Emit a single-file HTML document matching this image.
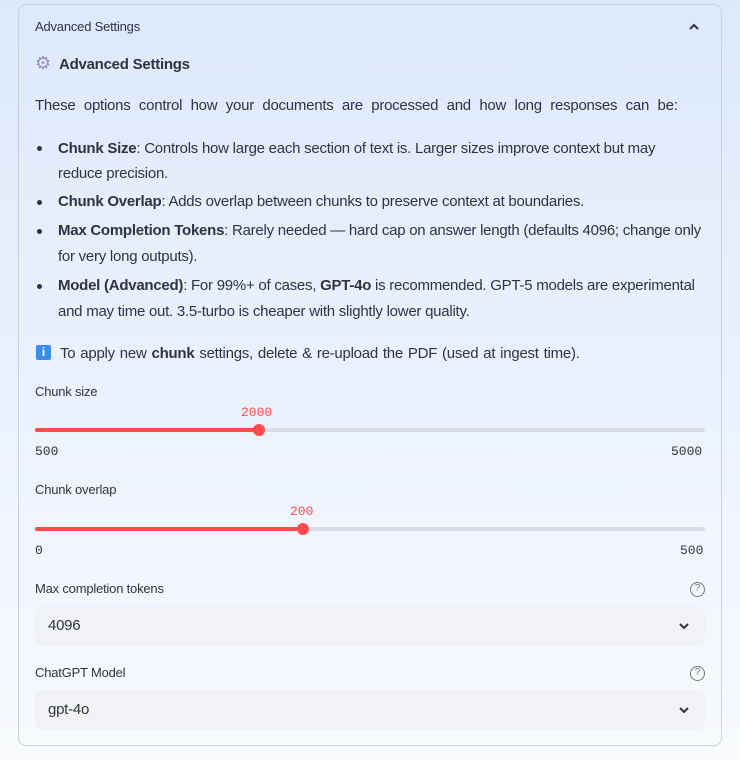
<!DOCTYPE html>
<html><head><style>
*{margin:0;padding:0;box-sizing:border-box}
body{width:740px;height:760px;background:linear-gradient(#dde9fb,#f8faff);font-family:"Liberation Sans",sans-serif;color:#31333f;position:relative;overflow:hidden}
.box{position:absolute;left:18px;top:4px;width:704px;height:742px;border:1px solid #c9d1dd;border-radius:8px}
.a{position:absolute;white-space:nowrap}
.t{font-size:15px;letter-spacing:-0.25px}
.s{font-size:13px;letter-spacing:-0.2px}
.m{font-family:"Liberation Mono",monospace;font-size:13px}
.track{position:absolute;left:35px;width:670px;height:4px;background:#d9dee8;border-radius:2px}
.fill{position:absolute;left:0;top:0;height:4px;background:#ff4b4b;border-radius:2px}
.thumb{position:absolute;top:-4px;width:12px;height:12px;border-radius:50%;background:#ff4b4b}
.sel{position:absolute;left:35px;width:670px;height:40px;background:#f0f2f6;border-radius:8px}
.dot{position:absolute;left:37px;width:5px;height:5px;border-radius:50%;background:#31333f}
.q{position:absolute;left:690px;width:15px;height:15px;border:1.3px solid #777;border-radius:50%;font-size:10px;text-align:center;line-height:12px;color:#777}
</style></head><body>
<div class="box"></div>
<div class="a s" style="left:35px;top:19px">Advanced Settings</div>
<svg class="a" style="left:688px;top:22px" width="12" height="10"><path d="M2 7L6 3L10 7" stroke="#31333f" stroke-width="2" fill="none"/></svg>
<div class="a" style="left:35px;top:53px;font-size:18px;line-height:20px;color:#9a8fc0">⚙</div>
<div class="a t" style="left:59px;top:56px;font-weight:bold">Advanced Settings</div>
<div class="a t" style="left:35px;top:97px;word-spacing:4.5px">These options control how your documents are processed and how long responses can be:</div>
<div class="dot" style="top:146px"></div>
<div class="a t" style="left:58px;top:136px;line-height:25px"><b>Chunk Size</b>: Controls how large each section of text is. Larger sizes improve context but may<br>reduce precision.</div>
<div class="dot" style="top:200px"></div>
<div class="a t" style="left:58px;top:193px"><b>Chunk Overlap</b>: Adds overlap between chunks to preserve context at boundaries.</div>
<div class="dot" style="top:229px"></div>
<div class="a t" style="left:58px;top:218px;line-height:26px"><b>Max Completion Tokens</b>: Rarely needed — hard cap on answer length (defaults 4096; change only<br>for very long outputs).</div>
<div class="dot" style="top:284px"></div>
<div class="a t" style="left:58px;top:273px;line-height:26px"><b>Model (Advanced)</b>: For 99%+ of cases, <b>GPT-4o</b> is recommended. GPT-5 models are experimental<br>and may time out. 3.5-turbo is cheaper with slightly lower quality.</div>
<div class="a" style="left:36px;top:345px;width:15px;height:15px;background:#3b8ee8;border-radius:2px;color:#fff;font-size:12px;font-weight:bold;text-align:center;line-height:15px">i</div>
<div class="a t" style="left:60px;top:345px;word-spacing:1px">To apply new <b>chunk</b> settings, delete &amp; re-upload the PDF (used at ingest time).</div>
<div class="a s" style="left:35px;top:384px">Chunk size</div>
<div class="a m" style="left:241px;top:405px;color:#ff4b4b">2000</div>
<div class="track" style="top:428px"><div class="fill" style="width:224px"></div><div class="thumb" style="left:218px"></div></div>
<div class="a m" style="left:35px;top:444px">500</div>
<div class="a m" style="left:671px;top:444px">5000</div>
<div class="a s" style="left:35px;top:482px">Chunk overlap</div>
<div class="a m" style="left:290px;top:504px;color:#ff4b4b">200</div>
<div class="track" style="top:527px"><div class="fill" style="width:268px"></div><div class="thumb" style="left:262px"></div></div>
<div class="a m" style="left:35px;top:543px">0</div>
<div class="a m" style="left:680px;top:543px">500</div>
<div class="a s" style="left:35px;top:581px">Max completion tokens</div>
<div class="q" style="top:582px">?</div>
<div class="sel" style="top:606px"></div>
<div class="a t" style="left:48px;top:617px">4096</div>
<svg class="a" style="left:678px;top:621px" width="12" height="10"><path d="M2 3L6 7L10 3" stroke="#31333f" stroke-width="2" fill="none"/></svg>
<div class="a s" style="left:35px;top:665px">ChatGPT Model</div>
<div class="q" style="top:666px">?</div>
<div class="sel" style="top:690px"></div>
<div class="a t" style="left:48px;top:701px">gpt-4o</div>
<svg class="a" style="left:678px;top:705px" width="12" height="10"><path d="M2 3L6 7L10 3" stroke="#31333f" stroke-width="2" fill="none"/></svg>
</body></html>
